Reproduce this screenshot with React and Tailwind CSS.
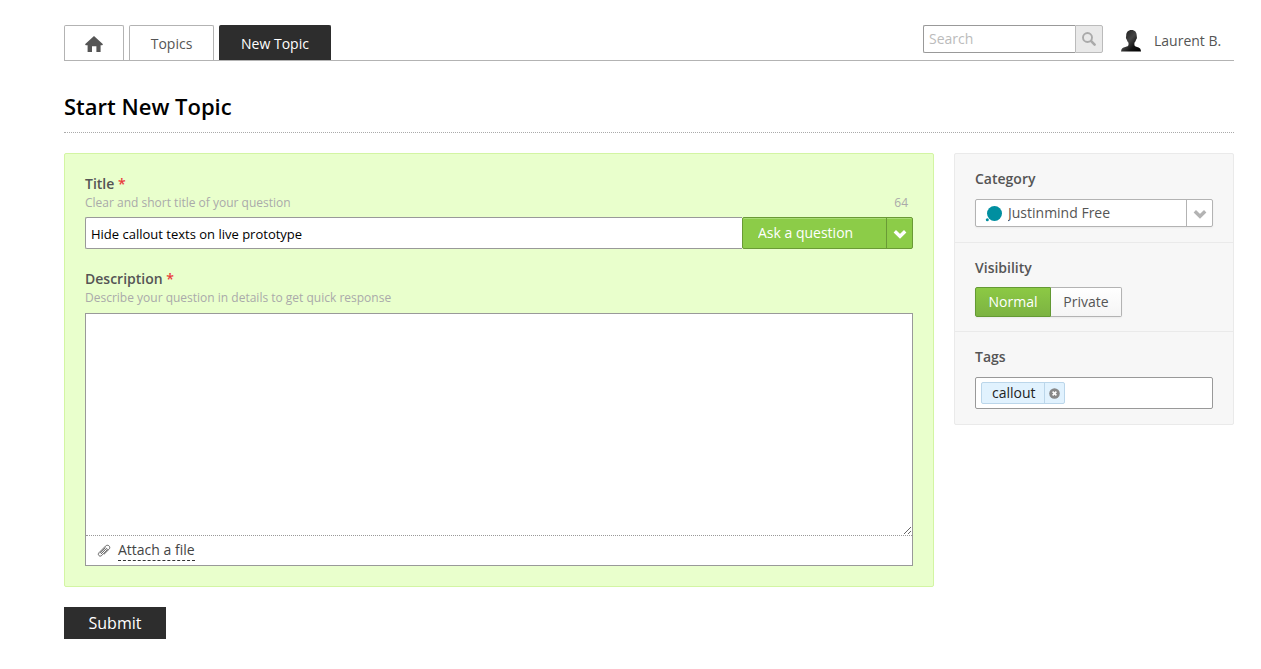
import { useState } from "react";

const tabClass = "flex h-[35px] items-center justify-center rounded-t-xs border border-b-0 pt-0.5";
const labelClass = "block text-sm leading-5 font-semibold text-[#555]";
const hintClass = "text-xs leading-[18px] text-[#aaa]";
const segmentClass = "flex h-[30px] items-center justify-center border border-[#b3b3b3] bg-linear-to-b from-white to-[#f5f5f5] shadow-xs has-checked:border-[#649a34] has-checked:from-[#8cc944] has-checked:to-[#7cb342] has-checked:text-white";

function HomeIcon() {
  return (
    <svg width="18" height="16" viewBox="0 0 18 16" fill="#555" aria-hidden="true">
      <path d="M9 0 18 8.2 17.2 9.2H15.6V16H11.4V10.2H7V16H2.6V9.2H.8L0 8.2Z" />
    </svg>
  );
}

function SearchIcon() {
  return (
    <svg width="14" height="14" viewBox="0 0 14 14" fill="none" stroke="#aaa" aria-hidden="true">
      <circle cx="5.5" cy="5.5" r="4.5" strokeWidth="1.9" />
      <path d="m9.200 9.200 3.400 3.400" strokeWidth="2.6" strokeLinecap="round" />
    </svg>
  );
}

function AvatarIcon() {
  return (
    <svg width="20" height="22" viewBox="0 0 20 22" aria-hidden="true">
      <defs>
        <linearGradient id="avatar" x1="0" y1="0" x2="1" y2="1">
          <stop offset="0" stopColor="#111" />
          <stop offset=".45" stopColor="#444" />
          <stop offset=".7" stopColor="#111" />
          <stop offset="1" stopColor="#000" />
        </linearGradient>
      </defs>
      <path
        d="M10.500 0c3.500 0 5.200 2.400 5.200 5.600 0 1 .4 1.300.2 2.400-.2 1-.7 1.300-1 2.200-.4 1.300-.9 2-1.500 2.600v2c0 1.300 1 1.700 2.600 2.300 2.500.7 3.700 1.300 4 4.400H0c.3-3.100 1.800-3.700 4.300-4.400 2-.6 3.200-1 3.200-2.300v-2c-.6-.6-1.100-1.300-1.500-2.600-.3-.9-.8-1.200-1-2.200-.2-1.100.2-1.400.2-2.400C5.200 2.400 7 0 10.500 0Z"
        fill="url(#avatar)"
      />
    </svg>
  );
}

function ChevronIcon({ color }) {
  return (
    <svg width="14" height="10" viewBox="0 0 14 10" fill="none" aria-hidden="true">
      <path d="m1.800 2.300 5.200 5 5.200-5" stroke={color} strokeWidth="3.400" />
    </svg>
  );
}

function ClipIcon() {
  return (
    <svg width="14" height="14" viewBox="0 0 14 14" fill="none" stroke="#555" strokeWidth=".9" strokeLinecap="round" aria-hidden="true">
      <path d="M4.200 9.800 9 4.900c.8-.8 1.900.2 1.100 1.100l-5.400 5.500c-1.900 1.800-4.600-.8-2.800-2.700l6.600-6.700c2.500-2.400 5.800.8 3.500 3.200L7.300 10" />
      <path d="M3.200 9 8.300 3.800" />
    </svg>
  );
}

function Section({ children }) {
  return <div className="border-b border-[#eaeaea] px-5 py-[15px] last:border-b-0">{children}</div>;
}

export default function App() {
  const [title, setTitle] = useState("Hide callout texts on live prototype");
  const [description, setDescription] = useState("");
  const [visibility, setVisibility] = useState("normal");
  const [tags, setTags] = useState(["callout"]);

  return (
    <div className="bg-white pt-[25px] pr-[27px] pb-[30px] pl-16 font-['Open_Sans',sans-serif] text-sm text-[#555]">
      <header className="flex justify-between border-b border-[#b3b3b3]">
        <nav className="flex gap-[5px]">
          <a href="#home" aria-label="Home" className={`${tabClass} w-15 border-[#b3b3b3]`}>
            <HomeIcon />
          </a>
          <a href="#topics" className={`${tabClass} w-[85px] border-[#b3b3b3]`}>Topics</a>
          <a href="#new" className={`${tabClass} -mb-px h-9 w-28 border-[#2d2d2d] bg-[#2d2d2d] font-medium text-white`}>New Topic</a>
        </nav>

        <div className="flex items-start gap-[18px]">
          <form role="search" className="flex h-7 w-[180px]" onSubmit={e => e.preventDefault()}>
            <input type="text" aria-label="Search" placeholder="Search"
              className="min-w-0 flex-1 rounded-l-xs border border-r-0 border-[#999] px-[5px] text-sm outline-none placeholder:text-[#bbb]" />
            <button type="submit" aria-label="Search" className="flex w-7 items-center justify-center rounded-r-xs border border-[#bbb] bg-[#e9e9e9]">
              <SearchIcon />
            </button>
          </form>
          <a href="#profile" className="flex h-8 w-[113px] items-center gap-[13px]">
            <AvatarIcon /> Laurent B.
          </a>
        </div>
      </header>

      <h1 className="border-b border-dotted border-[#aaa] pt-[31px] pb-3 text-[22px] leading-7 font-semibold text-black">Start New Topic</h1>

      <div className="mt-5 flex items-start gap-5">
        <main className="min-w-0 flex-1">
          <div className="rounded-xs border border-[#d3f5a3] bg-[#e9ffcc] p-5">
            <label htmlFor="title" className={labelClass}>Title <span className="text-[#e93c3c]">*</span></label>
            <div className={`${hintClass} mb-[5px] flex justify-between pr-[5px]`}>
              <span>Clear and short title of your question</span>
              <span>{100 - title.length}</span>
            </div>
            <div className="flex h-8">
              <input id="title" type="text" value={title} onChange={e => setTitle(e.target.value)}
                className="min-w-0 flex-1 rounded-l-xs border border-r-0 border-[#999] bg-white px-[5px] pt-0.5 text-[13px] text-black outline-none" />
              <div className="relative w-[171px]">
                <select aria-label="Topic type"
                  className="h-full w-full appearance-none rounded-xs border border-[#6a9a36] bg-[#8ccc48] pr-8 pl-[15px] font-medium text-white shadow-[inset_0_1px_0_#a9dc73] outline-none">
                  <option>Ask a question</option>
                  <option>Share an idea</option>
                  <option>Report a problem</option>
                </select>
                <span className="pointer-events-none absolute inset-y-px right-px flex w-[26px] items-center justify-center border-l border-[#6a9a36] pt-0.5">
                  <ChevronIcon color="#fff" />
                </span>
              </div>
            </div>

            <label htmlFor="description" className={`${labelClass} mt-5`}>Description <span className="text-[#e93c3c]">*</span></label>
            <p className={`${hintClass} mb-1.5`}>Describe your question in details to get quick response</p>
            <div className="border border-[#999] bg-white">
              <textarea id="description" value={description} onChange={e => setDescription(e.target.value)}
                className="block h-[221px] w-full resize-y p-[5px] outline-none" />
              <div className="flex h-[30px] items-center border-t border-dotted border-[#999] pl-[11px]">
                <ClipIcon />
                <button type="button" className="ml-[7px] border-b border-dashed border-[#333] leading-5 text-[#444]">Attach a file</button>
              </div>
            </div>
          </div>

          <button type="submit" className="mt-5 h-8 w-[102px] bg-[#2d2d2d] text-base font-medium text-white">Submit</button>
        </main>

        <aside className="w-[280px] shrink-0 rounded-xs border border-[#eaeaea] bg-[#f7f7f7]">
          <Section>
            <label htmlFor="category" className={`${labelClass} mb-2.5`}>Category</label>
            <div className="relative h-7">
              <select id="category"
                className="h-full w-full appearance-none rounded-xs border border-[#b3b3b3] bg-white pr-8 pl-8 text-sm shadow-xs outline-none">
                <option>Justinmind Free</option>
                <option>Justinmind Pro</option>
              </select>
              <svg width="18" height="18" viewBox="0 0 18 18" fill="#008fa0" aria-hidden="true" className="pointer-events-none absolute top-1.5 left-2.5">
                <circle cx="9.500" cy="8.500" r="7.500" />
                <circle cx="2.300" cy="14.700" r="1.500" />
              </svg>
              <span className="pointer-events-none absolute inset-y-px right-px flex w-[26px] items-center justify-center border-l border-[#b3b3b3] pt-0.5">
                <ChevronIcon color="#b3b3b3" />
              </span>
            </div>
          </Section>

          <Section>
            <fieldset>
              <legend className={`${labelClass} mb-2.5`}>Visibility</legend>
              <div className="flex h-7 items-center">
                <label className={`${segmentClass} w-[76px] rounded-l-xs`}>
                  <input type="radio" name="visibility" className="sr-only" checked={visibility === "normal"} onChange={() => setVisibility("normal")} />
                  Normal
                </label>
                <label className={`${segmentClass} w-[71px] rounded-r-xs border-l-0`}>
                  <input type="radio" name="visibility" className="sr-only" checked={visibility === "private"} onChange={() => setVisibility("private")} />
                  Private
                </label>
              </div>
            </fieldset>
          </Section>

          <Section>
            <label htmlFor="tags" className={`${labelClass} mb-2.5`}>Tags</label>
            <div className="flex h-8 items-center gap-[5px] rounded-xs border border-[#999] bg-white px-[5px]">
              {tags.map(tag => (
                <span key={tag} className="flex h-[22px] items-center rounded-xs border border-[#bbd6ea] bg-[#e1f2fe] pl-2.5 text-[#222]">
                  {tag}
                  <button type="button" aria-label={`Remove ${tag}`} onClick={() => setTags(t => t.filter(x => x !== tag))}
                    className="ml-2 flex h-full w-5 items-center justify-center border-l border-[#bbd6ea]">
                    <svg width="11" height="11" viewBox="0 0 11 11" aria-hidden="true">
                      <circle cx="5.500" cy="5.500" r="5.300" fill="#888" />
                      <path d="m3.600 3.600 3.800 3.800m0-3.800L3.600 7.400" stroke="#fff" strokeWidth="1.500" />
                    </svg>
                  </button>
                </span>
              ))}
              <input id="tags" type="text" className="min-w-0 flex-1 outline-none" />
            </div>
          </Section>
        </aside>
      </div>
    </div>
  );
}
